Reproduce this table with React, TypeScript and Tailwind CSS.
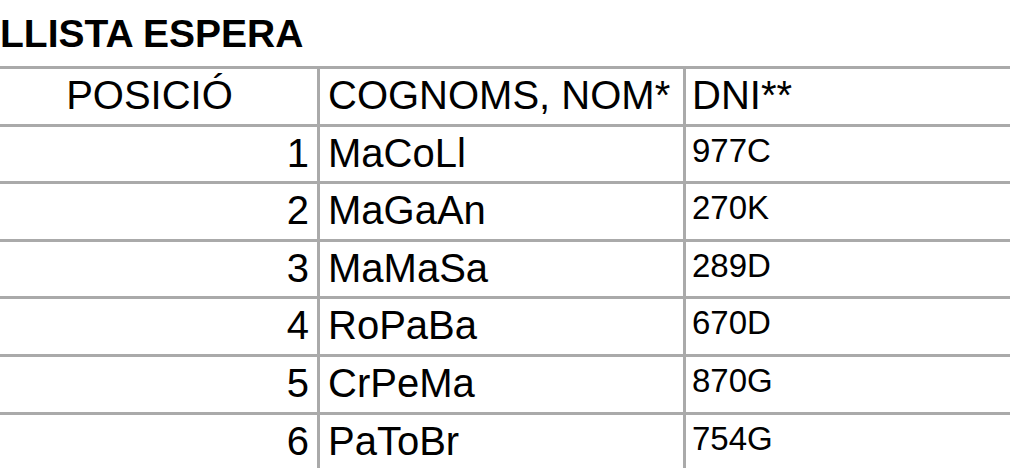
// Waiting list table — title + three-column grid with gray 3px rules.
// The table runs past the right and bottom edges of the window, so the page is clipped.

import React from 'react';

const rows = [
  { pos: 1, name: 'MaCoLl', dni: '977C' },
  { pos: 2, name: 'MaGaAn', dni: '270K' },
  { pos: 3, name: 'MaMaSa', dni: '289D' },
  { pos: 4, name: 'RoPaBa', dni: '670D' },
  { pos: 5, name: 'CrPeMa', dni: '870G' },
  { pos: 6, name: 'PaToBr', dni: '754G' },
];

export default function App() {
  return (
    <div className="h-[468px] w-[1010px] overflow-hidden bg-white text-black font-['Liberation_Sans',Arial,Helvetica,sans-serif]">
      {/* Title */}
      <div className="h-[66px] pt-[14px] text-[39px] font-bold leading-none">LLISTA ESPERA</div>

      {/* Table */}
      <div className="w-[1100px] border-t-[3px] border-[#aaaaaa]">
        {/* Header row */}
        <div className="flex h-[57.6px] border-b-[3px] border-[#aaaaaa] text-[40px] leading-none">
          <div className="w-[320px] shrink-0 border-r-[3px] border-[#aaaaaa] pt-[6px] pr-[18px] text-center">POSICIÓ</div>
          <div className="w-[366px] shrink-0 border-r-[3px] border-[#aaaaaa] pt-[6px] pl-[8px]">COGNOMS, NOM*</div>
          <div className="flex-1 pt-[6px] pl-[6px]">DNI**</div>
        </div>

        {rows.map((r) => (
          <div key={r.pos} className="flex h-[57.6px] border-b-[3px] border-[#aaaaaa] leading-none">
            <div className="w-[320px] shrink-0 border-r-[3px] border-[#aaaaaa] pt-[6px] pr-[8px] text-right text-[40px]">{r.pos}</div>
            <div className="w-[366px] shrink-0 border-r-[3px] border-[#aaaaaa] pt-[6px] pl-[8px] text-[40px]">{r.name}</div>
            <div className="flex-1 pt-[7px] pl-[6px] text-[33px]">{r.dni}</div>
          </div>
        ))}

        {/* next row continues below the fold */}
        <div className="flex h-[57.6px]">
          <div className="w-[320px] shrink-0 border-r-[3px] border-[#aaaaaa]" />
          <div className="w-[366px] shrink-0 border-r-[3px] border-[#aaaaaa]" />
          <div className="flex-1" />
        </div>
      </div>
    </div>
  );
}
